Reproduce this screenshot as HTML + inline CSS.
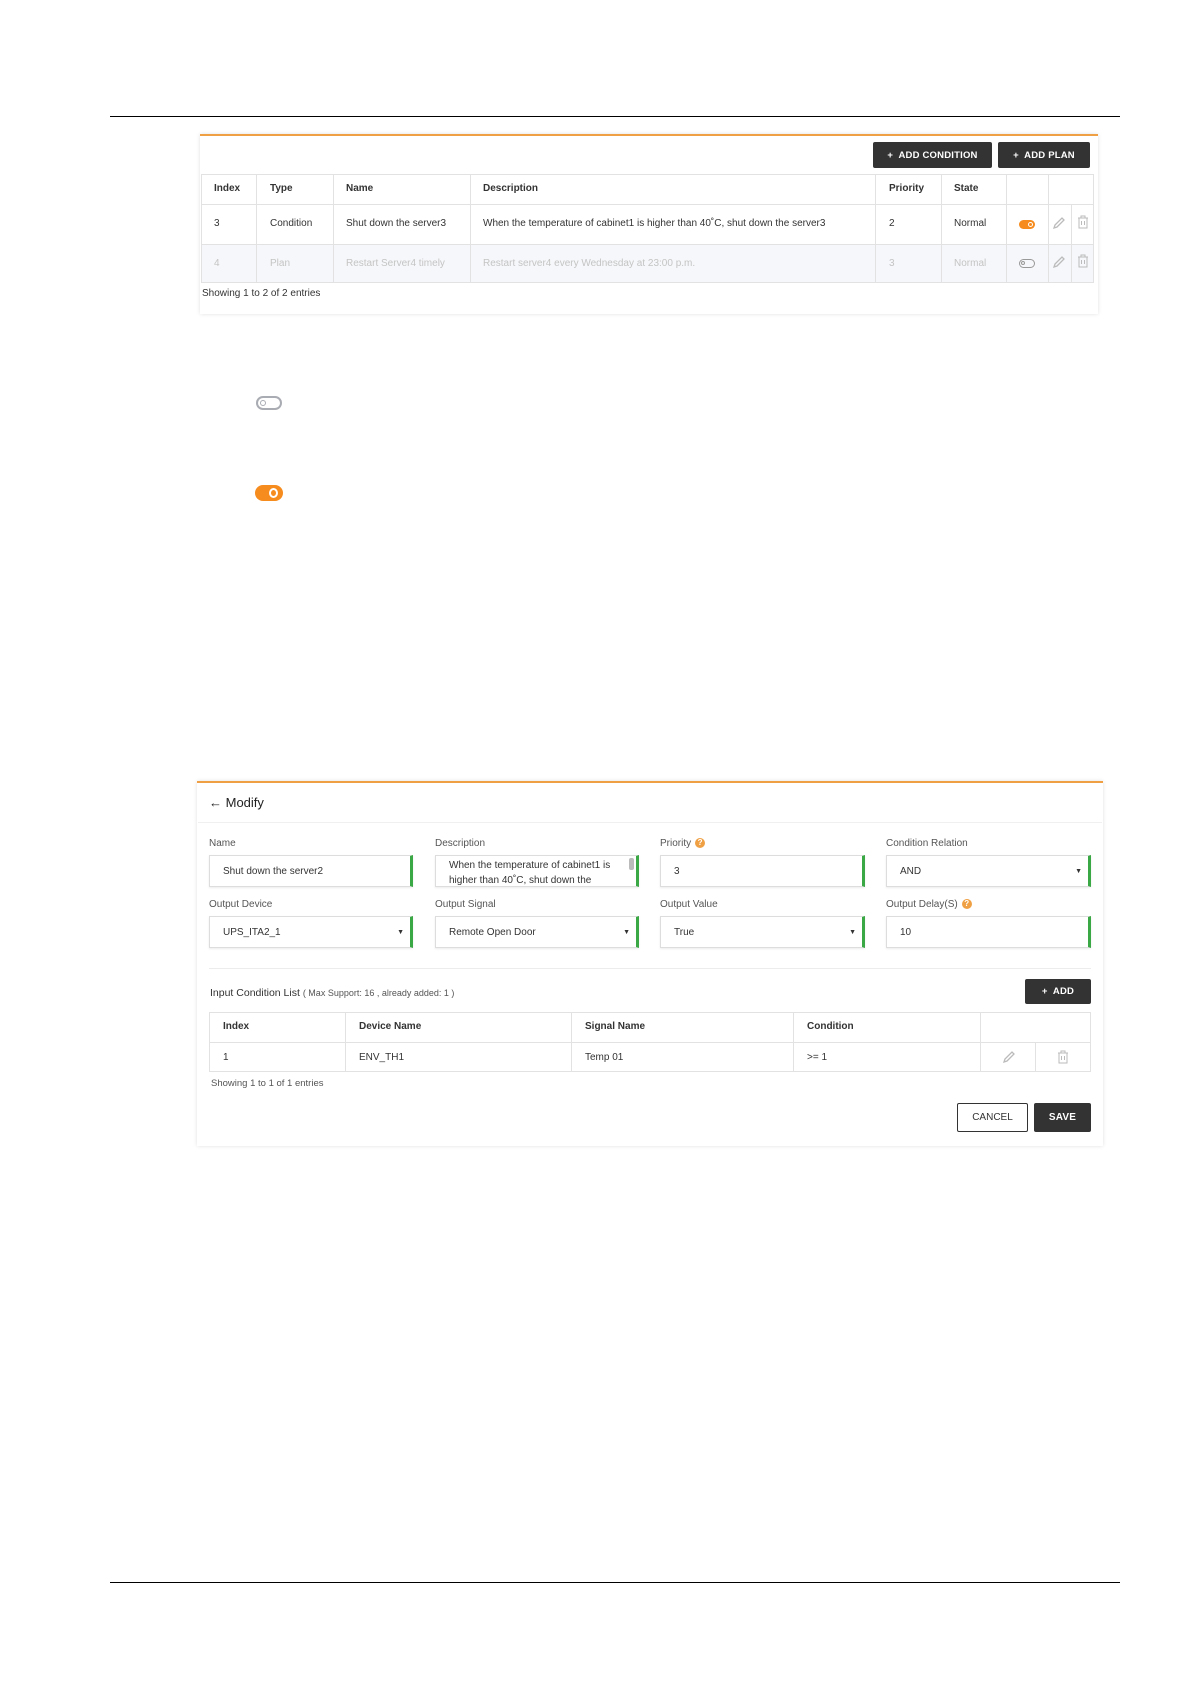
<!DOCTYPE html>
<html><head><meta charset="utf-8"><style>
*{box-sizing:border-box;margin:0;padding:0}
body{width:1190px;height:1684px;background:#fff;position:relative;font-family:"Liberation Sans",sans-serif;color:#333;overflow:hidden}
.a{position:absolute}
.hl{position:absolute;height:1px;background:#000}
.panel{position:absolute;background:#fff;box-shadow:0 0 4px rgba(0,0,0,.12);border-top:2px solid #f0a044}
.btn{position:absolute;background:#333;color:#fff;font-size:9.5px;font-weight:bold;display:flex;align-items:center;justify-content:center;border-radius:2px;letter-spacing:.2px}
.t{font-size:10px;white-space:nowrap;position:absolute}
.vl{position:absolute;width:1px;background:#e2e2e2}
.hr{position:absolute;height:1px;background:#e2e2e2}
.inp{position:absolute;border:1px solid #ddd;border-right:3px solid #3aa845;font-size:10px;padding-left:13px;display:flex;align-items:center;box-shadow:0 1px 2px rgba(0,0,0,.08)}
.arr{position:absolute;right:6px;top:50%;margin-top:-3px;font-size:7px}
.lbl{position:absolute;font-size:10px;color:#555}
.q{display:inline-block;width:10px;height:10px;border-radius:50%;background:#f0a044;color:#fff;font-size:8px;text-align:center;line-height:10px;font-weight:bold;margin-left:4px;vertical-align:top}
</style></head><body>
<div class="hl" style="left:110px;top:116px;width:1010px"></div>
<div class="hl" style="left:110px;top:1582px;width:1010px"></div>

<!-- panel 1 -->
<div class="panel" style="left:200px;top:134px;width:898px;height:180px"></div>
<div class="btn" style="left:873px;top:142px;width:119px;height:26px">+&nbsp; ADD CONDITION</div>
<div class="btn" style="left:998px;top:142px;width:92px;height:26px">+&nbsp; ADD PLAN</div>
<div class="a" style="left:202px;top:245px;width:891px;height:37px;background:#f6f7fa"></div>
<div class="a" style="left:201px;top:174px;width:893px;height:109px;border:1px solid #e2e2e2"></div>
<div class="hr" style="left:201px;top:204px;width:893px"></div>
<div class="hr" style="left:201px;top:244px;width:893px"></div>
<div class="vl" style="left:256px;top:174px;height:109px"></div>
<div class="vl" style="left:333px;top:174px;height:109px"></div>
<div class="vl" style="left:470px;top:174px;height:109px"></div>
<div class="vl" style="left:875px;top:174px;height:109px"></div>
<div class="vl" style="left:941px;top:174px;height:109px"></div>
<div class="vl" style="left:1006px;top:174px;height:109px"></div>
<div class="vl" style="left:1048px;top:174px;height:109px"></div>
<div class="vl" style="left:1071px;top:204px;height:79px"></div>
<div class="t" style="left:214px;top:183px;font-weight:bold">Index</div>
<div class="t" style="left:270px;top:183px;font-weight:bold">Type</div>
<div class="t" style="left:346px;top:183px;font-weight:bold">Name</div>
<div class="t" style="left:483px;top:183px;font-weight:bold">Description</div>
<div class="t" style="left:889px;top:183px;font-weight:bold">Priority</div>
<div class="t" style="left:954px;top:183px;font-weight:bold">State</div>
<div class="t" style="left:214px;top:218px">3</div>
<div class="t" style="left:270px;top:218px">Condition</div>
<div class="t" style="left:346px;top:218px">Shut down the server3</div>
<div class="t" style="left:483px;top:218px">When the temperature of cabinet1 is higher than 40˚C, shut down the server3</div>
<div class="t" style="left:889px;top:218px">2</div>
<div class="t" style="left:954px;top:218px">Normal</div>
<div class="t" style="left:214px;top:258px;color:#c4c4c4">4</div>
<div class="t" style="left:270px;top:258px;color:#c4c4c4">Plan</div>
<div class="t" style="left:346px;top:258px;color:#c4c4c4">Restart Server4 timely</div>
<div class="t" style="left:483px;top:258px;color:#c4c4c4">Restart server4 every Wednesday at 23:00 p.m.</div>
<div class="t" style="left:889px;top:258px;color:#c4c4c4">3</div>
<div class="t" style="left:954px;top:258px;color:#c4c4c4">Normal</div>
<div class="t" style="left:202px;top:288px">Showing 1 to 2 of 2 entries</div>
<div class="a" style="left:1019px;top:220px;width:16px;height:9px;border-radius:5px;background:#f68b1e"><div class="a" style="right:2px;top:2px;width:5px;height:5px;border-radius:50%;border:1px solid #fff"></div></div>
<div class="a" style="left:1019px;top:259px;width:16px;height:9px;border-radius:5px;border:1.5px solid #999"><div class="a" style="left:1px;top:1px;width:4px;height:4px;border-radius:50%;border:1px solid #999"></div></div>
<svg class="a" style="left:1052px;top:216px" width="14" height="14" viewBox="0 0 14 14"><path d="M2 12 L3 9 L10 2 L12 4 L5 11 Z" fill="none" stroke="#bbb" stroke-width="1.3"/></svg>
<svg class="a" style="left:1052px;top:255px" width="14" height="14" viewBox="0 0 14 14"><path d="M2 12 L3 9 L10 2 L12 4 L5 11 Z" fill="none" stroke="#bbb" stroke-width="1.3"/></svg>
<svg class="a" style="left:1077px;top:215px" width="12" height="14" viewBox="0 0 12 14"><path d="M2 3 H10 V13 H2 Z M1 3 H11 M4 3 V1 H8 V3 M4.5 6 V10 M7.5 6 V10" fill="none" stroke="#bbb" stroke-width="1"/></svg>
<svg class="a" style="left:1077px;top:254px" width="12" height="14" viewBox="0 0 12 14"><path d="M2 3 H10 V13 H2 Z M1 3 H11 M4 3 V1 H8 V3 M4.5 6 V10 M7.5 6 V10" fill="none" stroke="#bbb" stroke-width="1"/></svg>

<div class="a" style="left:256px;top:396px;width:26px;height:14px;border-radius:7px;border:2.5px solid #a9acb3"><div class="a" style="left:2px;top:2px;width:6px;height:6px;border-radius:50%;border:1.5px solid #a9acb3"></div></div>
<div class="a" style="left:255px;top:485px;width:28px;height:16px;border-radius:8px;background:#f68b1e"><div class="a" style="right:5px;top:3px;width:9px;height:10px;border-radius:50%;border:2px solid #fff"></div></div>

<!-- panel 2 -->
<div class="panel" style="left:197px;top:781px;width:906px;height:365px"></div>
<div class="hr" style="left:198px;top:822px;width:904px;background:#f0f0f0"></div>
<div class="a" style="left:209px;top:795px;font-size:13px;color:#222">← Modify</div>
<div class="lbl" style="left:209px;top:838px">Name</div>
<div class="lbl" style="left:435px;top:838px">Description</div>
<div class="lbl" style="left:660px;top:838px">Priority<span class="q">?</span></div>
<div class="lbl" style="left:886px;top:838px">Condition Relation</div>
<div class="inp" style="left:209px;top:855px;width:204px;height:32px">Shut down the server2</div>
<div class="inp" style="left:435px;top:855px;width:204px;height:32px;align-items:flex-start;padding-top:2px;line-height:15px">When the temperature of cabinet1 is<br>higher than 40˚C, shut down the</div>
<div class="a" style="left:629px;top:858px;width:5px;height:12px;background:#bbb;border-radius:2px"></div>
<div class="inp" style="left:660px;top:855px;width:205px;height:32px;padding-left:13px">3</div>
<div class="inp" style="left:886px;top:855px;width:205px;height:32px">AND<span class="arr">▼</span></div>
<div class="lbl" style="left:209px;top:899px">Output Device</div>
<div class="lbl" style="left:435px;top:899px">Output Signal</div>
<div class="lbl" style="left:660px;top:899px">Output Value</div>
<div class="lbl" style="left:886px;top:899px">Output Delay(S)<span class="q">?</span></div>
<div class="inp" style="left:209px;top:916px;width:204px;height:32px">UPS_ITA2_1<span class="arr">▼</span></div>
<div class="inp" style="left:435px;top:916px;width:204px;height:32px">Remote Open Door<span class="arr">▼</span></div>
<div class="inp" style="left:660px;top:916px;width:205px;height:32px">True<span class="arr">▼</span></div>
<div class="inp" style="left:886px;top:916px;width:205px;height:32px">10</div>
<div class="hr" style="left:209px;top:968px;width:882px;background:#ececec"></div>
<div class="a" style="left:210px;top:987px;font-size:10.5px;color:#333">Input Condition List <span style="font-size:9px;color:#555">( Max Support: 16 , already added: 1 )</span></div>
<div class="btn" style="left:1025px;top:979px;width:66px;height:25px">+&nbsp; ADD</div>
<div class="a" style="left:209px;top:1012px;width:882px;height:60px;border:1px solid #e2e2e2"></div>
<div class="hr" style="left:209px;top:1042px;width:882px"></div>
<div class="vl" style="left:345px;top:1012px;height:60px"></div>
<div class="vl" style="left:571px;top:1012px;height:60px"></div>
<div class="vl" style="left:793px;top:1012px;height:60px"></div>
<div class="vl" style="left:980px;top:1012px;height:60px"></div>
<div class="vl" style="left:1035px;top:1042px;height:30px"></div>
<div class="t" style="left:223px;top:1021px;font-weight:bold">Index</div>
<div class="t" style="left:359px;top:1021px;font-weight:bold">Device Name</div>
<div class="t" style="left:585px;top:1021px;font-weight:bold">Signal Name</div>
<div class="t" style="left:807px;top:1021px;font-weight:bold">Condition</div>
<div class="t" style="left:223px;top:1052px">1</div>
<div class="t" style="left:359px;top:1052px">ENV_TH1</div>
<div class="t" style="left:585px;top:1052px">Temp 01</div>
<div class="t" style="left:807px;top:1052px">&gt;= 1</div>
<svg class="a" style="left:1002px;top:1050px" width="14" height="14" viewBox="0 0 14 14"><path d="M2 12 L3 9 L10 2 L12 4 L5 11 Z" fill="none" stroke="#bbb" stroke-width="1.3"/></svg>
<svg class="a" style="left:1057px;top:1050px" width="12" height="14" viewBox="0 0 12 14"><path d="M2 3 H10 V13 H2 Z M1 3 H11 M4 3 V1 H8 V3 M4.5 6 V10 M7.5 6 V10" fill="none" stroke="#bbb" stroke-width="1"/></svg>
<div class="t" style="left:211px;top:1078px;font-size:9.5px;color:#555">Showing 1 to 1 of 1 entries</div>
<div class="a" style="left:957px;top:1103px;width:71px;height:29px;border:1.5px solid #333;font-size:10px;display:flex;align-items:center;justify-content:center;border-radius:2px">CANCEL</div>
<div class="btn" style="left:1034px;top:1103px;width:57px;height:29px;font-size:10px">SAVE</div>
</body></html>
